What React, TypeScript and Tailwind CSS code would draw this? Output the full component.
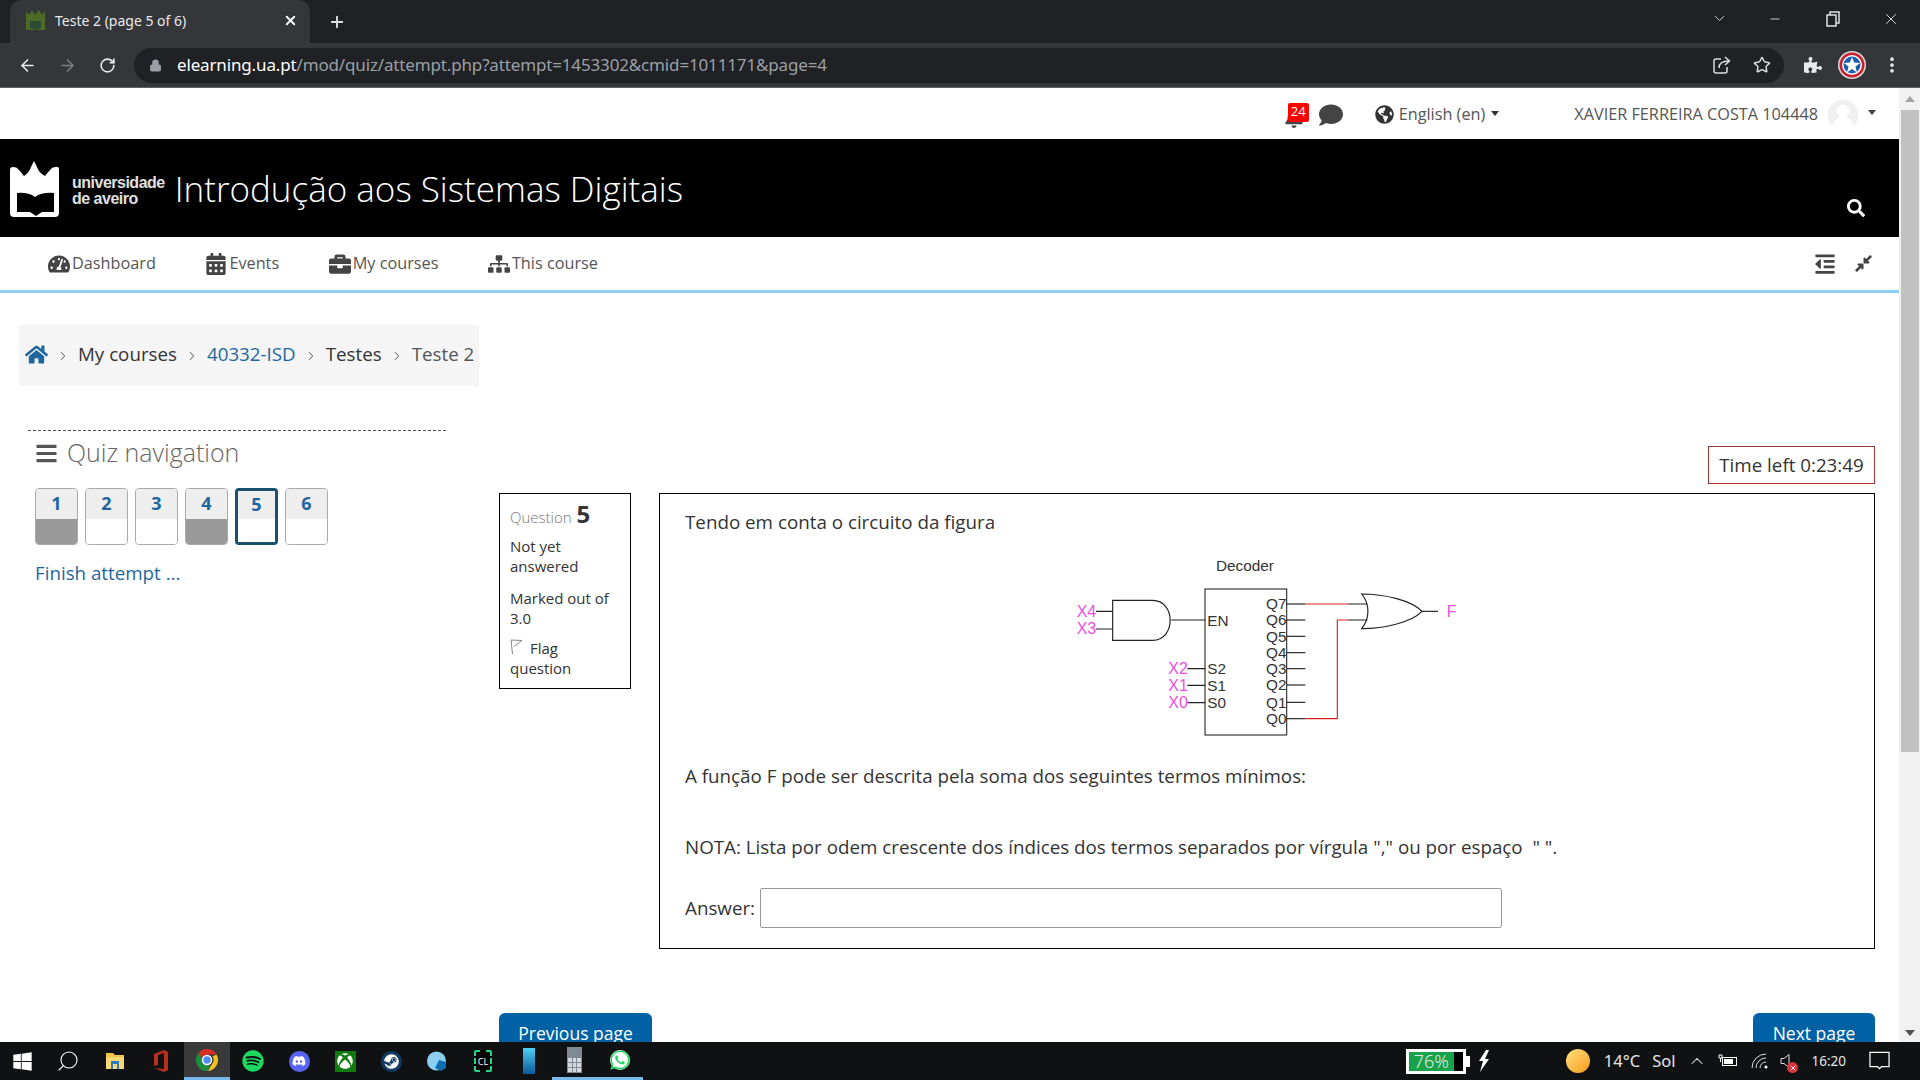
import React from "react";
import {
  FaBars,
  FaBell,
  FaBriefcase,
  FaCalendarAlt,
  FaComment,
  FaCompressAlt,
  FaDiscord,
  FaGlobeAmericas,
  FaHome,
  FaOutdent,
  FaPuzzlePiece,
  FaSearch,
  FaSitemap,
  FaSpotify,
  FaSteam,
  FaTachometerAlt,
  FaWhatsapp,
  FaWindows,
  FaXbox,
} from "react-icons/fa";
import { ArrowLeft, ArrowRight, ChevronDown, ChevronRight, ChevronUp, EllipsisVertical, Lock, Minus, Plus, RotateCw, Search, Star, X } from "lucide-react";

const Favicon = () => (
  <svg width="21" height="22" viewBox="0 0 21 22" className="shrink-0">
    <path d="M1 1l3 4 3-5 3 5 4-5 3 5 3-4v19H1z" fill="#4d6b24" />
    <path d="M5 11h11v7l-5.500 2L5 18z" fill="#2f4a36" />
  </svg>
);

const Captain = () => (
  <svg width="30" height="30" viewBox="0 0 30 30">
    <circle cx="15" cy="15" r="14" fill="#d8d8d8" />
    <circle cx="15" cy="15" r="12.500" fill="#c8202f" />
    <circle cx="15" cy="15" r="10" fill="#fff" />
    <circle cx="15" cy="15" r="8.500" fill="#1c5fb0" />
    <path d="M15 7l2.100 5.600 6 .3-4.700 3.700 1.600 5.800-5-3.300-5 3.300 1.600-5.800-4.700-3.700 6-.3z" fill="#fff" />
  </svg>
);

const BrowserChrome = () => (
  <div className="shrink-0 bg-[#202124] text-white font-['Noto_Sans',sans-serif]">
    <div className="flex h-[43px] items-end pl-[10px]">
      <div className="flex h-[43px] w-[300px] items-center rounded-t-xl bg-[#35363a] pb-[2px] pl-[15px] pr-[12px]">
        <Favicon />
        <span className="ml-[9px] flex-1 text-[14px] text-[#e8eaed]">Teste 2 (page 5 of 6)</span>
        <X size={15} strokeWidth={3} />
      </div>
      <div className="ml-[18px] flex h-[43px] items-center">
        <Plus size={18} strokeWidth={2.5} className="text-[#dfe1e5]" />
      </div>
      <div className="ml-auto flex h-[43px] items-center pb-[6px] text-[#dfe1e5]">
        <ChevronDown size={17} strokeWidth={1.25} />
        <div className="ml-[40px]"><Minus size={14} strokeWidth={1.5} /></div>
        <svg width="14" height="16" viewBox="0 0 14 16" className="ml-[44px]" fill="none" stroke="currentColor" strokeWidth="1.500">
          <rect x="1" y="4" width="9" height="11" />
          <path d="M4 4V1h9v11h-3" />
        </svg>
        <div className="ml-[42px] mr-[20px]"><X size={18} strokeWidth={1.25} /></div>
      </div>
    </div>
    <div className="flex h-[45px] items-center border-b border-[#5f6063] bg-[#35363a] pl-[18px]">
      <ArrowLeft size={19} strokeWidth={2} className="text-[#e8eaed]" />
      <ArrowRight size={19} strokeWidth={2} className="ml-[21px] text-[#7d7f82]" />
      <RotateCw size={17} strokeWidth={2.25} className="ml-[22px] text-[#e8eaed]" />
      <div className="ml-[18px] flex h-[35px] w-[1650px] items-center rounded-full bg-[#202124] pl-[15px] pr-[13px]">
        <Lock size={13} fill="#9aa0a6" className="text-[#9aa0a6]" />
        <span className="ml-[15px] text-[17px] tracking-[-0.15px] text-white">
          elearning.ua.pt<span className="text-[#9aa0a6]">/mod/quiz/attempt.php?attempt=1453302&amp;cmid=1011171&amp;page=4</span>
        </span>
        <div className="ml-auto flex items-center gap-[22px] text-[#dadce0]">
          <svg width="18" height="20" viewBox="0 0 18 20" fill="none" stroke="currentColor" strokeWidth="1.500">
            <path d="M8 4H3a2 2 0 00-2 2v10a2 2 0 002 2h9a2 2 0 002-2v-4" />
            <path d="M6 13c0-5 3-7 10-7M12 2l4.500 4-4.500 4" />
          </svg>
          <Star size={18} strokeWidth={2} />
        </div>
      </div>
      <FaPuzzlePiece size={18} className="ml-[20px] text-[#e8eaed]" />
      <div className="ml-[15px]"><Captain /></div>
      <EllipsisVertical size={20} strokeWidth={2.5} className="ml-[15px] text-[#e8eaed]" />
    </div>
  </div>
);

const UALogo = () => (
  <svg width="52" height="56" viewBox="0 0 52 56" className="mt-[1px] shrink-0">
    <path
      d="M0 9q0-3 3-3 4 0 5 2 3 3 6 7 5-3 7-9 2-4 3-6 1 2 3 6 2 6 8 9 3-4 6-7 1-2 5-2 3-1 3 3v43q0 4-4 4H4q-4 0-4-4z"
      fill="#fff"
    />
    <path d="M7 32q11-1 18 4 7-5 19-4v19H32l-6 4-6-4H7z" fill="#000" />
  </svg>
);

const TopBar = () => (
  <div className="flex h-[51px] shrink-0 items-center justify-end bg-white pr-[23px] pt-[2px] text-[16.250px] text-[#555]">
    <div className="relative mr-[15px] mt-[6px] text-[#444]">
      <FaBell size={20} />
      <span className="absolute -right-[5px] -top-[5px] flex h-[19px] w-[21px] items-center justify-center rounded-[2px] bg-[#f00] text-[13px] text-white">
        24
      </span>
    </div>
    <FaComment size={24} className="mr-[32px] text-[#444]" />
    <FaGlobeAmericas size={19} className="mr-[5px] text-[#333]" />
    <span>English (en)</span>
    <span className="ml-[6px] mb-[3px] h-0 w-0 border-x-[4.500px] border-t-[5px] border-x-transparent border-t-[#333]" />
    <span className="ml-[75px]">XAVIER FERREIRA COSTA 104448</span>
    <svg width="32" height="32" viewBox="0 0 32 32" className="ml-[9px]">
      <circle cx="16" cy="16" r="15.500" fill="#f0f0f0" />
      <circle cx="16" cy="12" r="6.500" fill="#fff" />
      <path d="M5 27c2-7 6-9 11-9s9 2 11 9a15 15 0 01-22 0z" fill="#fff" />
    </svg>
    <span className="ml-[9px] mb-[4px] h-0 w-0 border-x-[4.500px] border-t-[5px] border-x-transparent border-t-[#444]" />
  </div>
);

const SiteHeader = () => (
  <div className="relative flex h-[98px] shrink-0 items-center bg-black pl-[10px] text-white">
    <UALogo />
    <div className="ml-[10px] mt-[6px] font-['Liberation_Sans',sans-serif] text-[16px] font-bold leading-[16px] tracking-[-0.5px] text-[#e0e0e0]">
      <div>universidade</div>
      <div>de aveiro</div>
    </div>
    <h1 className="ml-[10px] mt-[3px] text-[35px] font-light">Introdução aos Sistemas Digitais</h1>
    <FaSearch size={18} className="absolute right-[34px] top-[60px]" />
  </div>
);

const navItems = [
  { label: "Dashboard", icon: <FaTachometerAlt size={22} /> },
  { label: "Events", icon: <FaCalendarAlt size={22} /> },
  { label: "My courses", icon: <FaBriefcase size={22} /> },
  { label: "This course", icon: <FaSitemap size={22} /> },
];

const NavBar = () => (
  <div className="flex h-[56px] shrink-0 items-center border-b-[3px] border-[#8ecff4] bg-white pl-[48px] pr-[26px] text-[16.250px] text-[#555]">
    <div className="flex gap-[49.500px]">
      {navItems.map((item) => (
        <div key={item.label} className="flex items-center gap-[2px]">
          <span className="text-[#444]">{item.icon}</span>
          {item.label}
        </div>
      ))}
    </div>
    <div className="ml-auto flex items-center gap-[18px] text-[#444]">
      <FaOutdent size={22} />
      <FaCompressAlt size={19} />
    </div>
  </div>
);

const Sep = () => <ChevronRight size={14} strokeWidth={1.5} className="mx-[8px] mt-[2px] shrink-0 text-[#333]" />;

const Breadcrumb = () => (
  <div className="ml-[19px] mt-[32px] flex h-[61px] w-[460px] shrink-0 items-center bg-[#f5f5f5] pb-[2px] pl-[6px] text-[18.750px] text-[#333]">
    <FaHome size={23} className="text-[#1f669e]" />
    <Sep />
    <span>My courses</span>
    <Sep />
    <span className="text-[#1f669e]">40332-ISD</span>
    <Sep />
    <span>Testes</span>
    <Sep />
    <span className="text-[#555]">Teste 2</span>
  </div>
);

const quizButtons = [
  { n: 1, answered: true },
  { n: 2, answered: false },
  { n: 3, answered: false },
  { n: 4, answered: true },
  { n: 5, answered: false, current: true },
  { n: 6, answered: false },
];

const QuizNav = () => (
  <div className="ml-[28px] w-[418px] shrink-0 border-t border-dashed border-[#555] pl-[7px]">
    <div className="mt-[4px] flex h-[36px] items-center text-[25px] font-light text-[#666]">
      <FaBars size={23} className="mr-[9px] text-[#555]" />
      Quiz navigation
    </div>
    <div className="mt-[17px] flex gap-[7px]">
      {quizButtons.map((b) => (
        <div
          key={b.n}
          className={
            b.current
              ? "flex h-[57px] w-[43px] flex-col overflow-hidden rounded-[4px] border-[3px] border-[#1a4f6e] bg-white"
              : "flex h-[57px] w-[43px] flex-col overflow-hidden rounded-[4px] border border-[#aaa] bg-white"
          }
        >
          <div
            className={
              b.current
                ? "flex h-[28px] items-center justify-center bg-[#eee] pb-[2px] text-[18px] font-bold text-[#1f669e]"
                : "flex h-[30px] items-center justify-center bg-[#eee] pb-[2px] text-[18px] font-bold text-[#1f669e]"
            }
          >
            {b.n}
          </div>
          <div className={b.answered ? "flex-1 bg-[#999]" : "flex-1 bg-white"} />
        </div>
      ))}
    </div>
    <div className="mt-[14px] text-[18.750px] text-[#1f669e]">Finish attempt ...</div>
  </div>
);

const QuestionInfo = () => (
  <div className="h-[196px] w-[132px] shrink-0 border border-black px-[10px] pt-[10px] text-[15px] leading-[20px] text-[#333]">
    <div className="flex items-baseline font-light text-[#777]">
      Question <span className="ml-[5px] text-[24px] font-bold text-[#333]">5</span>
    </div>
    <div className="mt-[9px]">Not yet answered</div>
    <div className="mt-[12px]">Marked out of 3.0</div>
    <div className="mt-[10px]">
      <svg width="13" height="17" viewBox="0 0 13 17" className="mr-[7px] inline-block align-[-1px]" fill="none" stroke="#888">
        <path d="M2.500 16L1 2l11 .5-8 6" />
      </svg>
      Flag
      <br />
      question
    </div>
  </div>
);

const outputs = [
  { label: "Q7", y: 192 },
  { label: "Q6", y: 240 },
  { label: "Q5", y: 289 },
  { label: "Q4", y: 338 },
  { label: "Q3", y: 386 },
  { label: "Q2", y: 435 },
  { label: "Q1", y: 487 },
  { label: "Q0", y: 536 },
];

const Circuit = () => (
  <svg width="460" height="210" viewBox="0 0 1380 630" className="ml-[355px] mt-[4px] block font-['Liberation_Sans',sans-serif]">
    <text x="528" y="92" fill="#333" fontSize="46">Decoder</text>
    <g fill="none" stroke="#222" strokeWidth="3.500">
      <rect x="495" y="147" width="245" height="438" stroke="#333" />
      <path d="M218 181h120c70 0 70 120 0 120H218z" />
      <path d="M168 214h50M168 267h50M394 240h102M442 386h54M442 436h54M442 488h54" />
      {outputs.map((o) => (
        <path key={o.label} d={"M740 " + o.y + "h56"} />
      ))}
      <path d="M922 192h60M922 240h60" />
      <path d="M965 162c70 0 150 20 181 52-31 32-111 52-181 52 25-30 25-74 0-104z" />
      <path d="M1146 214h48" />
      <path d="M796 192h126M796 536h96V240h30" stroke="#e02020" />
    </g>
    <g fontSize="46" fill="#333">
      <text x="502" y="257">EN</text>
      <text x="502" y="402">S2</text>
      <text x="502" y="454">S1</text>
      <text x="502" y="505">S0</text>
      {outputs.map((o) => (
        <text key={o.label} x="678" y={o.y + 16}>{o.label}</text>
      ))}
    </g>
    <g fontSize="48" fill="#ea4fe6">
      <text x="110" y="230">X4</text>
      <text x="110" y="283">X3</text>
      <text x="385" y="402">X2</text>
      <text x="385" y="452">X1</text>
      <text x="385" y="505">X0</text>
      <text x="1220" y="230">F</text>
    </g>
  </svg>
);

const QuestionContent = () => (
  <div className="h-[456px] flex-1 border border-black pl-[25px] pt-[15px] text-[18.800px] leading-[27px] text-[#333]">
    <p>Tendo em conta o circuito da figura</p>
    <Circuit />
    <p className="mt-[13px]">A função F pode ser descrita pela soma dos seguintes termos mínimos:</p>
    <p className="mt-[44px]">NOTA: Lista por odem crescente dos índices dos termos separados por vírgula "," ou por espaço&nbsp; " ".</p>
    <div className="mt-[27px] flex items-center">
      <span>Answer:</span>
      <div className="ml-[5px] h-[40px] w-[742px] rounded-[2px] border border-[#999] bg-white" />
    </div>
  </div>
);

const Main = () => (
  <div className="flex min-h-0 flex-1 flex-col overflow-hidden bg-white font-['Open_Sans',sans-serif]">
    <Breadcrumb />
    <div className="mt-[44px] flex shrink-0">
      <QuizNav />
      <div className="ml-[53px] mr-[24px] flex-1 pt-[16px]">
        <div className="flex justify-end">
          <div className="flex h-[38px] w-[167px] items-center justify-center border border-[#a33] text-[18.750px] text-[#333]">Time left 0:23:49</div>
        </div>
        <div className="mt-[9px] flex gap-[28px]">
          <QuestionInfo />
          <QuestionContent />
        </div>
        <div className="mt-[64px] flex justify-between">
          <div className="flex h-[40px] w-[153px] items-center justify-center rounded-md bg-[#0062a5] text-[17.500px] text-white">Previous page</div>
          <div className="flex h-[40px] w-[122px] items-center justify-center rounded-md bg-[#0062a5] text-[17.500px] text-white">Next page</div>
        </div>
      </div>
    </div>
  </div>
);

const Scrollbar = () => (
  <div className="flex w-[21px] shrink-0 flex-col items-center bg-[#f1f1f1]">
    <span className="mt-[8px] h-0 w-0 border-x-[5px] border-b-[6px] border-x-transparent border-b-[#a3a3a3]" />
    <div className="mt-[8px] h-[642px] w-[18px] bg-[#c1c1c1]" />
    <span className="mt-auto mb-[6px] h-0 w-0 border-x-[5px] border-t-[6px] border-x-transparent border-t-[#505050]" />
  </div>
);

const Chrome = () => (
  <svg width="24" height="24" viewBox="0 0 24 24">
    <path d="M12 1a11 11 0 019.500 5.500H12a5.500 5.500 0 00-5.200 3.700L3.500 5A11 11 0 0112 1z" fill="#d93025" />
    <path d="M21.500 6.500A11 11 0 0113 23l4-7a5.500 5.500 0 00.500-7.500z" fill="#f9c220" />
    <path d="M3.500 5l4.800 8.500A5.500 5.500 0 0015 17l-2 6A11 11 0 013.500 5z" fill="#1e8e3e" />
    <circle cx="12" cy="12" r="4.500" fill="#4b8bf4" stroke="#fff" strokeWidth="1.500" />
  </svg>
);

const Explorer = () => (
  <svg width="20" height="20" viewBox="0 0 20 20">
    <path d="M1 2h7l2 2h9v3H1z" fill="#f4c542" />
    <path d="M1 6h18v12H1z" fill="#f7d774" />
    <path d="M6 10h8v8h-2v-5H8v5H6z" fill="#2b7cc4" />
  </svg>
);

const Office = () => (
  <svg width="18" height="24" viewBox="0 0 18 24">
    <path d="M2 5l10-4 4 2v18l-4 2-10-4 10 1V4L6 6v10l-4 1z" fill="#b5301e" />
  </svg>
);

const Taskbar = () => (
  <div className="flex h-[38px] shrink-0 items-center bg-[#101112] font-['Noto_Sans',sans-serif] text-white">
    <div className="flex h-full items-center">
      <div className="flex h-full w-[45px] items-center justify-center"><FaWindows size={21} /></div>
      <div className="flex h-full w-[46px] items-center justify-center"><Search size={24} strokeWidth={1.1} className="-scale-x-100" /></div>
      <div className="flex h-full w-[47px] items-center justify-center"><Explorer /></div>
      <div className="flex h-full w-[46px] items-center justify-center"><Office /></div>
      <div className="flex h-full w-[46px] items-center justify-center border-b-[3px] border-[#76b9ed] bg-[#3a3a3a]"><Chrome /></div>
      <div className="flex h-full w-[46px] items-center justify-center"><FaSpotify size={22} className="text-[#1ed760]" /></div>
      <div className="flex h-full w-[46px] items-center justify-center">
        <span className="flex h-[21px] w-[21px] items-center justify-center rounded-full bg-[#5865f2]"><FaDiscord size={14} /></span>
      </div>
      <div className="flex h-full w-[46px] items-center justify-center">
        <span className="flex h-[21px] w-[21px] items-center justify-center bg-[#107c10]"><FaXbox size={16} /></span>
      </div>
      <div className="flex h-full w-[46px] items-center justify-center">
        <span className="flex h-[21px] w-[21px] items-center justify-center rounded-full bg-[#12395f]"><FaSteam size={15} /></span>
      </div>
      <div className="flex h-full w-[46px] items-center justify-center">
        <svg width="20" height="21" viewBox="0 0 20 21">
          <circle cx="9.500" cy="10" r="9.500" fill="#8bd0f2" />
          <path d="M12 9l7 2v6l-5 3-6-3z" fill="#0f6cb0" />
        </svg>
      </div>
      <div className="flex h-full w-[46px] items-center justify-center">
        <span className="flex h-[22px] w-[18px] items-center justify-center rounded-[2px] border-2 border-dashed border-[#21d789] bg-black text-[9px] leading-none">CL</span>
      </div>
      <div className="flex h-full w-[46px] items-center justify-center">
        <span className="h-[26px] w-[12px] bg-gradient-to-b from-[#4fd1f5] to-[#0a5a9c]" />
      </div>
      <div className="flex h-full w-[45px] items-center justify-center border-b-[3px] border-[#76b9ed]">
        <span className="grid h-[26px] w-[15px] grid-cols-3 content-end gap-[1px] bg-[#7f8a94] p-[1px]">
          {[1, 2, 3, 4, 5, 6, 7, 8, 9].map((k) => (
            <span key={k} className="h-[4px] bg-[#d6dade]" />
          ))}
        </span>
      </div>
      <div className="flex h-full w-[46px] items-center justify-center border-b-[3px] border-[#76b9ed]">
        <span className="flex h-[20px] w-[20px] items-center justify-center rounded-full bg-white">
          <FaWhatsapp size={22} className="shrink-0 text-[#25d366]" />
        </span>
      </div>
    </div>
    <div className="ml-auto flex items-center pr-[30px] text-[#e6e6e6]">
      <div className="flex items-center">
        <div className="flex h-[25px] w-[60px] border-[3px] border-white bg-black">
          <div className="flex w-[45px] items-center justify-center bg-[#16a34a] text-[18px] font-light">76%</div>
        </div>
        <span className="h-[11px] w-[4px] bg-white" />
      </div>
      <svg width="12" height="22" viewBox="0 0 12 22" className="ml-[8px]">
        <path d="M8 0L1 11h4l-3 11 9-13H7l4-9z" fill="#fff" />
      </svg>
      <span className="ml-[76px] h-[24px] w-[24px] rounded-full bg-gradient-to-br from-[#ffe27a] to-[#f59a00]" />
      <span className="ml-[14px] text-[16.500px]">14°C</span>
      <span className="ml-[12px] text-[16.500px]">Sol</span>
      <ChevronUp size={20} strokeWidth={1.25} className="ml-[12px]" />
      <svg width="20" height="14" viewBox="0 0 20 14" className="ml-[11px]" fill="none" stroke="#fff">
        <rect x="4.500" y="3.500" width="14" height="8" />
        <rect x="6" y="5" width="9" height="5" fill="#fff" stroke="none" />
        <path d="M1 1h3v3H1zM2.500 4v4" />
      </svg>
      <svg width="18" height="16" viewBox="0 0 18 16" className="ml-[13px]" fill="none" stroke="#ddd">
        <path d="M1 15A14 14 0 0115 1M5 15A10 10 0 0115 5M9 15a6 6 0 016-6" />
        <circle cx="15" cy="14" r="1.500" fill="#fff" stroke="none" />
      </svg>
      <div className="relative ml-[11px] h-[16px] w-[12px]">
        <svg width="12" height="16" viewBox="0 0 12 16" fill="none" stroke="#ddd">
          <path d="M1 5.500h3l5-4v13l-5-4H1z" />
        </svg>
        <span className="absolute -bottom-[4px] -right-[6px] flex h-[11px] w-[11px] items-center justify-center rounded-full bg-[#d9343a]">
          <X size={8} strokeWidth={3} />
        </span>
      </div>
      <span className="ml-[19px] text-[13.500px]">16:20</span>
      <svg width="21" height="20" viewBox="0 0 22 20" className="ml-[23px]" fill="none" stroke="#fff" strokeWidth="1.300">
        <path d="M1 1h20v15h-8l-2 2-2-2H1z" />
      </svg>
    </div>
  </div>
);

export default function App() {
  return (
    <div className="flex h-screen w-full flex-col overflow-hidden bg-white">
      <BrowserChrome />
      <div className="flex min-h-0 flex-1">
        <div className="flex min-w-0 flex-1 flex-col font-['Open_Sans',sans-serif]">
          <TopBar />
          <SiteHeader />
          <NavBar />
          <Main />
        </div>
        <Scrollbar />
      </div>
      <Taskbar />
    </div>
  );
}
